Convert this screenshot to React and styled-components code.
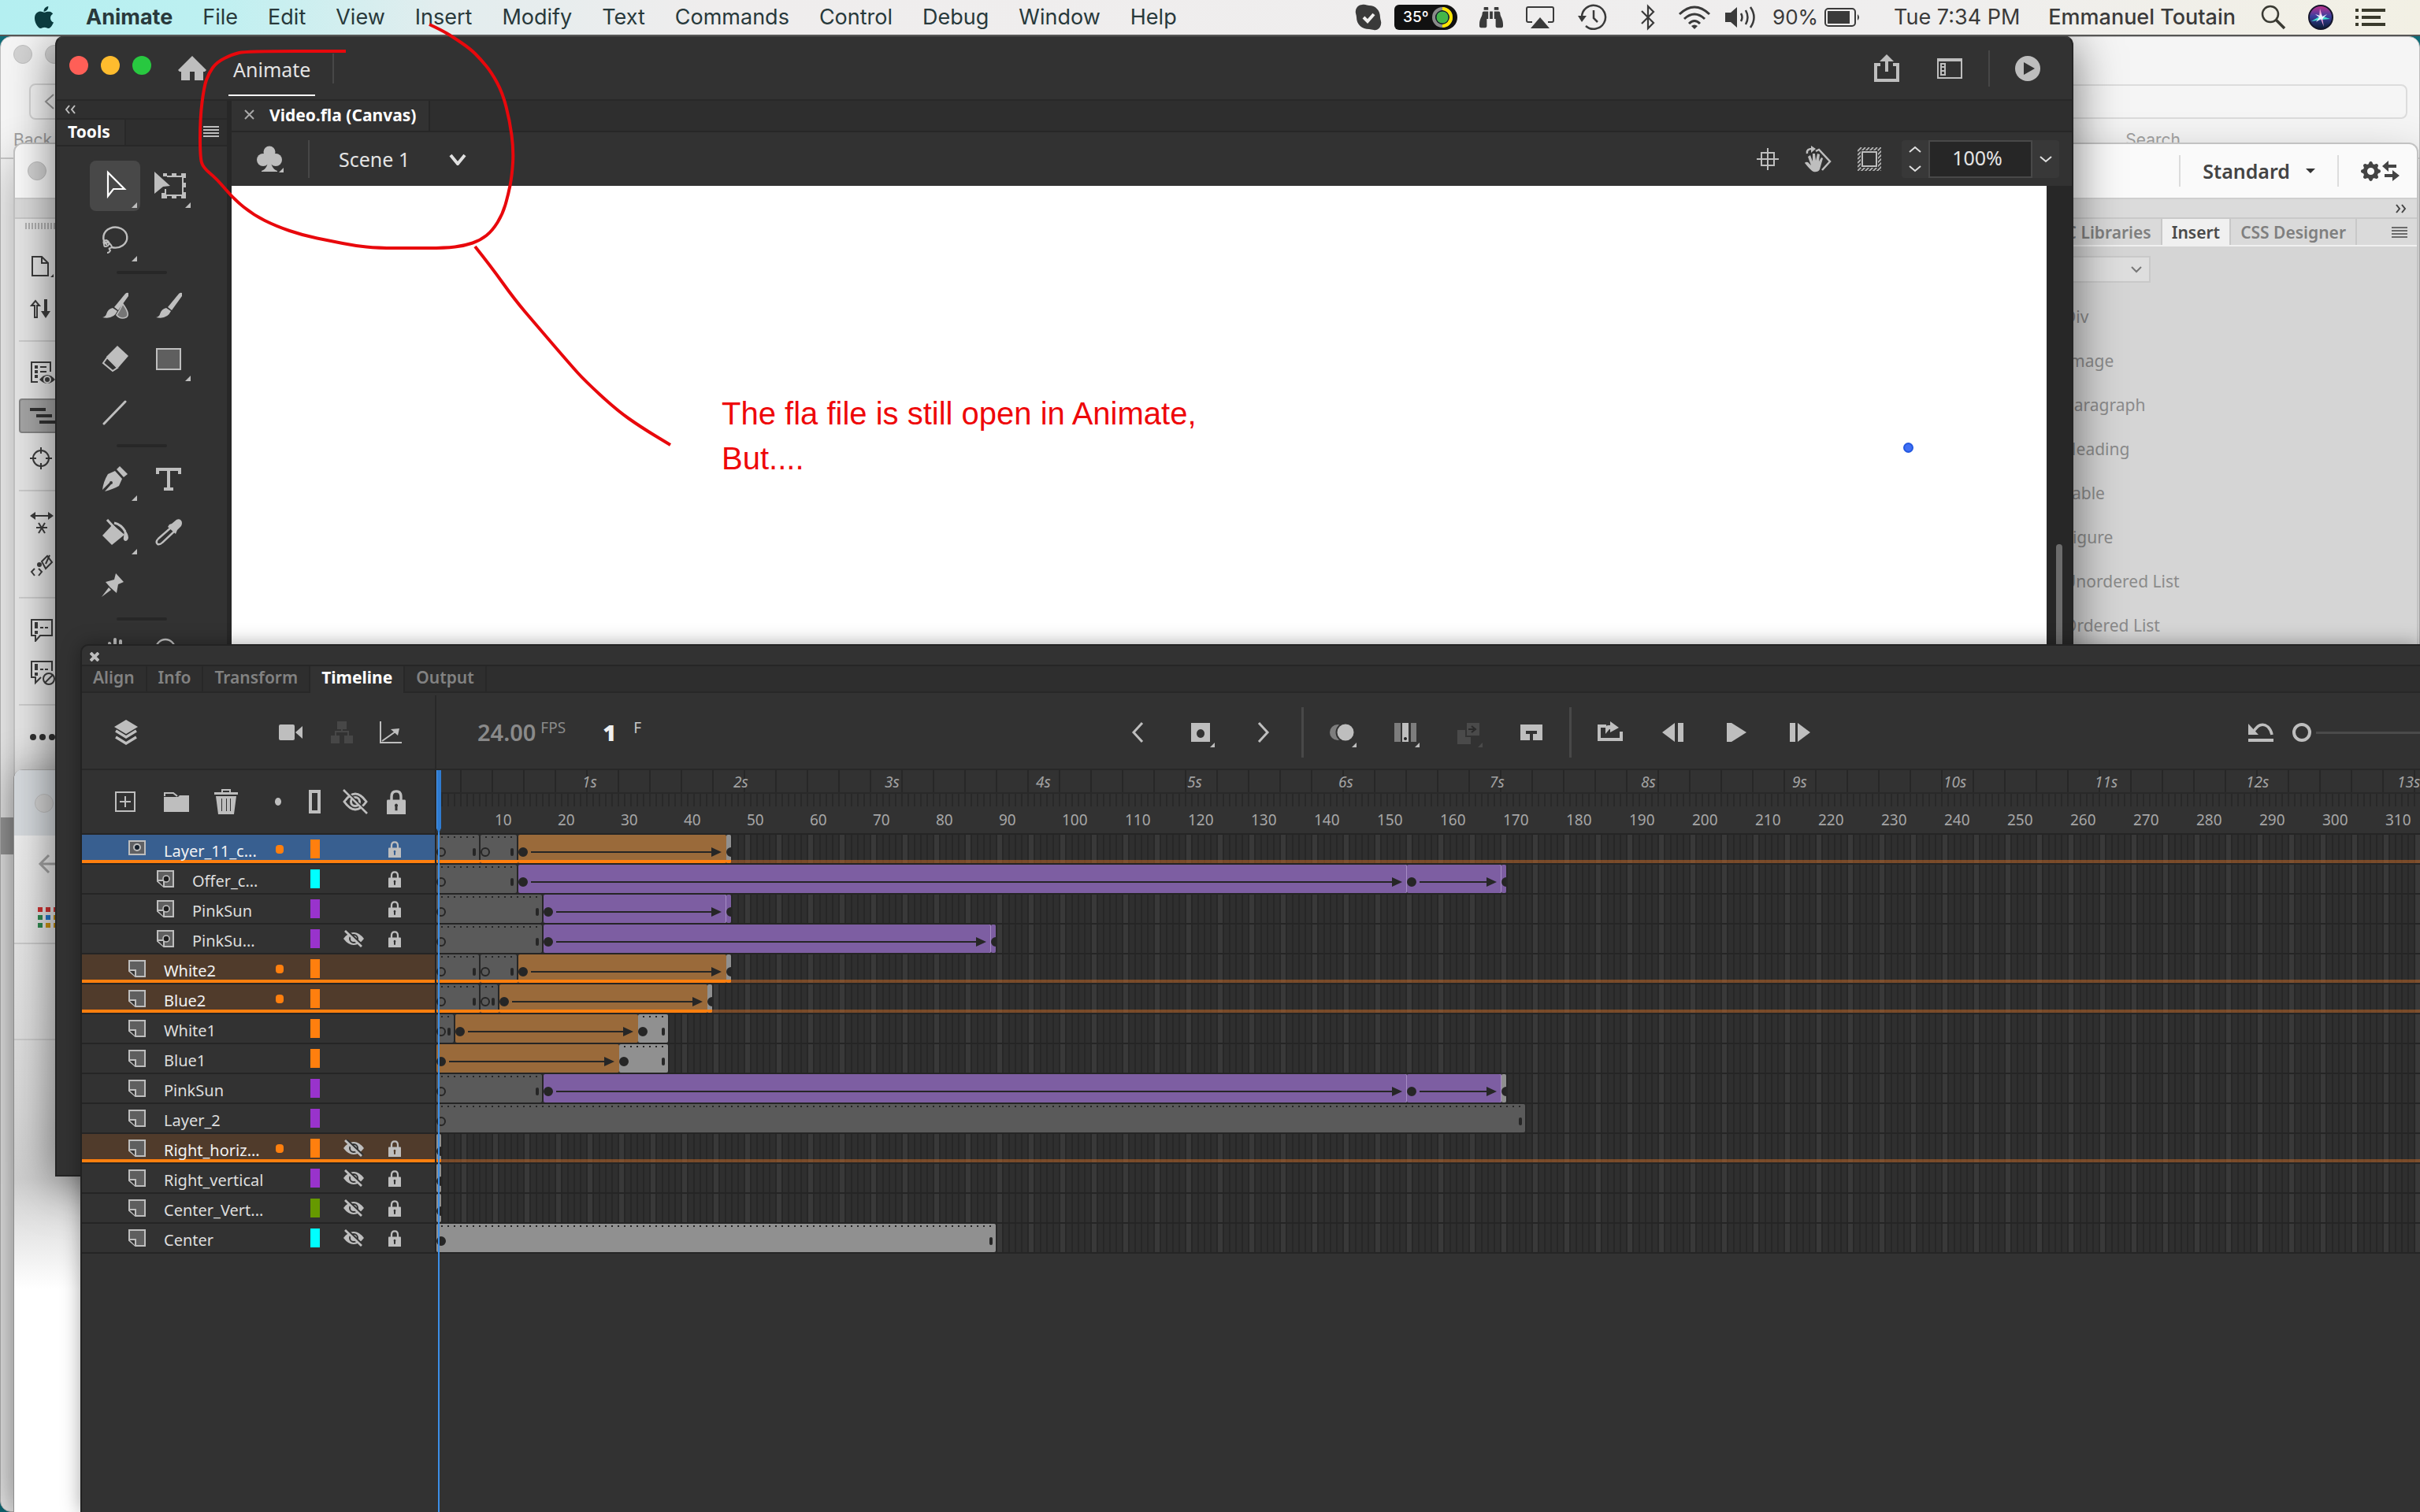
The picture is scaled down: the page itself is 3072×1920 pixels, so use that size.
import React from 'react'
import styled, { createGlobalStyle, css } from 'styled-components'
import { IoLogoApple } from 'react-icons/io5'
import { FaBinoculars } from 'react-icons/fa'
import { BsFillGearFill } from 'react-icons/bs'

const GlobalStyle = createGlobalStyle`
*{
    box-sizing:border-box;
}
html, body, #root{
    margin:0;
    height:100%;
}
body{
    overflow:hidden;
    font-family:"Noto Sans", "Open Sans", sans-serif;
}
button, input, select{
    font:inherit;
    color:inherit;
    background:none;
    border:0;
    margin:0;
    padding:0;
}
ul{
    list-style:none;
    margin:0;
    padding:0;
}
svg{
    display:block;
    flex:none;
}
`

const LIGHT = '#bebebe'

/* ---------- data ---------- */

const menus = ['File', 'Edit', 'View', 'Insert', 'Modify', 'Text', 'Commands', 'Control', 'Debug', 'Window', 'Help']

const insertItems = ['Div', 'Image', 'Paragraph', 'Heading', 'Table', 'Figure', 'Unordered List', 'Ordered List']

const timelineTabs = ['Align', 'Info', 'Transform', 'Timeline', 'Output']

// a span is [kind, frames]
const layers = [
    { name: 'Layer_11_c...', icon: 'mask', color: '#ff7f0e', state: 'selected', lock: true, spans: [['empty', 7], ['empty', 6], ['motion', 33], ['tail', 1]] },
    { name: 'Offer_c...', icon: 'masked', color: '#00ffff', lock: true, spans: [['empty', 13], ['tween', 141], ['tween', 15], ['tweenTail', 1]] },
    { name: 'PinkSun', icon: 'masked', color: '#9933cc', lock: true, spans: [['empty', 17], ['tween', 29], ['tweenTail', 1]] },
    { name: 'PinkSu...', icon: 'masked', color: '#9933cc', hidden: true, lock: true, spans: [['empty', 17], ['tween', 71], ['tweenTail', 1]] },
    { name: 'White2', color: '#ff7f0e', state: 'parented', spans: [['empty', 7], ['empty', 6], ['motion', 33], ['tail', 1]] },
    { name: 'Blue2', color: '#ff7f0e', state: 'parented', spans: [['empty', 7], ['empty', 3], ['motion', 33], ['tail', 1]] },
    { name: 'White1', color: '#ff7f0e', spans: [['empty', 3], ['motion', 29], ['key', 5]] },
    { name: 'Blue1', color: '#ff7f0e', spans: [['motion', 29], ['key', 8]] },
    { name: 'PinkSun', color: '#9933cc', spans: [['empty', 17], ['tween', 137], ['tween', 15], ['tail', 1]] },
    { name: 'Layer_2', color: '#9933cc', spans: [['empty', 173]] },
    { name: 'Right_horiz...', color: '#ff7f0e', state: 'parented', hidden: true, lock: true, spans: [['tail', 1]] },
    { name: 'Right_vertical', color: '#9933cc', hidden: true, lock: true, spans: [['tail', 1]] },
    { name: 'Center_Vert...', color: '#669900', hidden: true, lock: true, spans: [['tail', 1]] },
    { name: 'Center', color: '#00ffff', hidden: true, lock: true, spans: [['key', 89]] },
]

const seconds = Array.from({ length: 13 }, (_, i) => `${i + 1}s`)
const frameNumbers = Array.from({ length: 31 }, (_, i) => (i + 1) * 10)

const loopPoints = [
    [545, 31], [560, 38], [575, 47], [597, 62], [610, 75], [624, 92], [638, 118], [647, 153], [652, 190],
    [650, 223], [645, 248], [638, 272], [625, 293], [610, 305], [590, 312], [565, 315], [522, 315], [480, 315],
    [450, 312], [420, 306], [385, 299], [350, 287], [322, 273], [297, 253], [275, 227], [258, 213], [254, 200],
    [254, 150], [259, 110], [265, 93], [275, 79], [295, 69], [312, 65], [439, 65],
]

const leaderPoints = [
    [603, 313], [623, 338], [653, 380], [681, 413], [724, 463], [742, 483], [782, 520], [813, 542], [851, 565],
]

// runs quadratic curves through the midpoints of a hand drawn line
function smooth(points) {
    const [first, ...rest] = points
    const last = rest[rest.length - 1]
    const curves = rest.slice(0, -1).map(([x, y], i) => {
        const [nx, ny] = rest[i + 1]
        return `Q${x} ${y} ${(x + nx) / 2} ${(y + ny) / 2}`
    })
    return `M${first}${curves.join('')}L${last}`
}

/* ---------- icons ---------- */

function Icon({ w, h, children }) {
    return (
        <svg width={w} height={h} viewBox={`0 0 ${w} ${h}`} fill="none" aria-hidden="true">
            {children}
        </svg>
    )
}

const Chevron = ({ w, h, dir, color = '#e0e0e0', weight = 2 }) => {
    const d = {
        down: `M2 2L${w / 2} ${h - 2}L${w - 2} 2`,
        up: `M2 ${h - 2}L${w / 2} 2L${w - 2} ${h - 2}`,
        left: `M${w - 2} 2L2 ${h / 2}L${w - 2} ${h - 2}`,
        right: `M2 2L${w - 2} ${h / 2}L2 ${h - 2}`,
    }[dir]
    return <Icon w={w} h={h}><path d={d} stroke={color} strokeWidth={weight} /></Icon>
}

const DoubleChevron = ({ flip, color }) => (
    <Icon w={16} h={12}>
        <path d={flip ? 'M2 1L6 6L2 11M9 1L13 6L9 11' : 'M6 1L2 6L6 11M13 1L9 6L13 11'} stroke={color} strokeWidth="2" />
    </Icon>
)

const Lines = ({ color }) => (
    <Icon w={20} h={14}><path d="M0 1H20M0 5H20M0 9H20M0 13H20" stroke={color} strokeWidth="2" /></Icon>
)

const Cross = ({ size, weight, color }) => (
    <Icon w={size} h={size}>
        <path d={`M1 1L${size - 1} ${size - 1}M${size - 1} 1L1 ${size - 1}`} stroke={color} strokeWidth={weight} />
    </Icon>
)

const SkypeIcon = () => (
    <Icon w={34} h={34}>
        <path d="M9 1C13 0 16 2 18 2C26 2 32 8 32 17C32 20 34 23 33 26C32 31 28 34 24 33C22 33 20 32 18 32C9 32 2 26 2 17C2 14 0 11 1 8C2 4 5 1 9 1Z" fill="#3a3a3a" />
        <path d="M11 17L16 22L24 13" stroke="#f0efee" strokeWidth="4" />
    </Icon>
)

const AirplayIcon = () => (
    <Icon w={38} h={30}>
        <path d="M9 21H4Q2 21 2 19V4Q2 2 4 2H34Q36 2 36 4V19Q36 21 34 21H29" stroke="#3a3a3a" strokeWidth="2" />
        <path d="M19 15L31 29H7Z" fill="#3a3a3a" />
    </Icon>
)

const TimeMachineIcon = () => (
    <Icon w={38} h={34}>
        <path d="M6 17A15 15 0 1 1 11 28" stroke="#3a3a3a" strokeWidth="2.5" />
        <path d="M1 15H12L6 23Z" fill="#3a3a3a" />
        <path d="M21 8V18L26 23" stroke="#3a3a3a" strokeWidth="2.5" />
    </Icon>
)

const BluetoothIcon = () => (
    <Icon w={20} h={34}>
        <path d="M2 9L17 24L10 31V3L17 10L2 25" stroke="#3a3a3a" strokeWidth="2.2" />
    </Icon>
)

const WifiIcon = () => (
    <Icon w={42} h={32}>
        <path d="M2 12Q21 -6 40 12M8 18Q21 6 34 18M14 24Q21 17 28 24" stroke="#3a3a3a" strokeWidth="3" />
        <path d="M17 27Q21 24 25 27L21 31Z" fill="#3a3a3a" />
    </Icon>
)

const VolumeIcon = () => (
    <Icon w={42} h={32}>
        <path d="M0 10H7L15 3V29L7 22H0Z" fill="#3a3a3a" />
        <path d="M20 11Q23 16 20 21M26 7Q31 16 26 25M32 3Q41 16 32 29" stroke="#3a3a3a" strokeWidth="2.5" />
    </Icon>
)

const BatteryIcon = () => (
    <Icon w={46} h={24}>
        <rect x="1" y="1" width="38" height="22" rx="4" stroke="#3a3a3a" strokeWidth="2" />
        <rect x="4" y="4" width="28" height="16" fill="#3a3a3a" />
        <path d="M42 8Q46 12 42 16Z" fill="#3a3a3a" />
    </Icon>
)

const SpotlightIcon = () => (
    <Icon w={32} h={32}>
        <circle cx="12" cy="12" r="10" stroke="#3a3a33" strokeWidth="2.5" />
        <path d="M19 19L30 30" stroke="#3a3a33" strokeWidth="3.5" />
    </Icon>
)

const SiriIcon = () => (
    <Icon w={32} h={32}>
        <defs>
            <linearGradient id="siri" x1="0" y1="0" x2="0" y2="1">
                <stop offset="0" stopColor="#c62f8d" />
                <stop offset="0.45" stopColor="#3b3f9e" />
                <stop offset="1" stopColor="#0a1b33" />
            </linearGradient>
        </defs>
        <circle cx="16" cy="16" r="15" fill="url(#siri)" stroke="#15152a" strokeWidth="2" />
        <path d="M4 21L16 14L28 18L17 19Z" fill="#43e0d0" />
        <path d="M15 5L18 15L17 18L14 15ZM18 17L20 28L16 18Z" fill="#f3a5d8" />
        <path d="M16 11L18 15L24 12L19 17L18 19L16 18L10 22L14 16L9 12L15 14Z" fill="#eef8ff" />
    </Icon>
)

const ListIcon = () => (
    <Icon w={38} h={22}>
        <path d="M0 2H4M8 2H38M0 11H4M8 11H32M0 20H4M8 20H38" stroke="#3a3a2c" strokeWidth="4" />
    </Icon>
)

const HomeIcon = () => (
    <Icon w={36} h={32}>
        <path d="M18 0L36 18L34 20H32V31H21V20H15V31H4V20H2L0 18Z" fill={LIGHT} />
    </Icon>
)

const ShareIcon = () => (
    <Icon w={34} h={36}>
        <path d="M9 13H3V33H31V13H25" stroke={LIGHT} strokeWidth="4" />
        <path d="M17 22V6" stroke={LIGHT} strokeWidth="4" />
        <path d="M17 0L26 9H8Z" fill={LIGHT} />
    </Icon>
)

const WorkspaceIcon = () => (
    <Icon w={34} h={28}>
        <rect x="2" y="2" width="30" height="24" stroke={LIGHT} strokeWidth="2" />
        <path d="M1 3H33" stroke={LIGHT} strokeWidth="4" />
        <path d="M6 8H11V22H6ZM6 12H11M6 17H11" stroke={LIGHT} strokeWidth="2" />
    </Icon>
)

const PlayCircle = () => (
    <Icon w={32} h={32}>
        <circle cx="16" cy="16" r="16" fill={LIGHT} />
        <path d="M11 8L25 16L11 24Z" fill="#323232" />
    </Icon>
)

const ClubIcon = () => (
    <Icon w={34} h={34}>
        <circle cx="16" cy="8" r="7.500" fill={LIGHT} />
        <circle cx="8" cy="18" r="8" fill={LIGHT} />
        <circle cx="24" cy="18" r="8" fill={LIGHT} />
        <path d="M15 12H17Q17 29 26 32V33H6V32Q15 29 15 12Z" fill={LIGHT} />
        <path d="M34 28V34H28Z" fill={LIGHT} />
    </Icon>
)

const CenterStage = () => (
    <Icon w={28} h={28}>
        <rect x="6" y="6" width="16" height="16" stroke={LIGHT} strokeWidth="2" />
        <path d="M14 0V11M14 17V28M0 14H11M17 14H28" stroke={LIGHT} strokeWidth="2" />
        <path d="M11 14H17M14 11V17" stroke={LIGHT} strokeWidth="2" />
    </Icon>
)

const RotateHand = () => (
    <Icon w={34} h={34}>
        <path d="M3 10Q2 4 9 4" stroke={LIGHT} strokeWidth="2.5" />
        <path d="M8 0L14 4L8 9Z" fill={LIGHT} />
        <path d="M14 7L18 5L32 20L22 31" stroke={LIGHT} strokeWidth="2.5" />
        <path d="M7 12L10 20L10 10L13 10L14 19L16 10L19 11L18 20L21 15L23 16L19 30Q17 34 11 33Q7 31 0 22Q1 20 4 21L8 25L4 14Z" fill={LIGHT} />
    </Icon>
)

const ClipStage = () => (
    <Icon w={30} h={30}>
        <path d={Array.from({ length: 12 }, (_, i) => `M0 ${i * 5 + 5}L${i * 5 + 5} 0`).join('')} stroke="#b4b4b4" strokeWidth="1.8" />
        <rect x="4" y="4" width="22" height="22" fill="#323232" />
        <rect x="6" y="6" width="18" height="18" stroke={LIGHT} strokeWidth="2" />
    </Icon>
)

const tools = {
    select: <path d="M10 12V42L17 33L31 33Z" transform="translate(13 3)" stroke="#fff" strokeWidth="2.2" />,
    transform: (
        <>
            <path d="M14 14L34 32L25 33L14 42Z" fill={LIGHT} />
            <path d="M30 20H50V44H28V36" stroke={LIGHT} strokeWidth="2" />
            <path d="M25 18H30M36 18H42M48 18H52V22M52 28V34M52 40V46H48M42 46H36M30 46H25V41" stroke={LIGHT} strokeWidth="4" />
        </>
    ),
    lasso: (
        <>
            <path d="M22 39A15 13 0 1 1 28 42" stroke={LIGHT} strokeWidth="2.4" />
            <path d="M18 38Q16 33 21 33Q27 36 23 40Q18 43 18 38Q20 34 25 37Q30 42 26 43Q23 43 26 46Q25 49 22 49" stroke={LIGHT} strokeWidth="2" />
        </>
    ),
    fluid: (
        <>
            <path d="M49 16Q47 15 45 17L31 34L36 38L49 20Z" fill={LIGHT} />
            <path d="M29 35Q23 36 21 43Q20 46 16 47Q30 50 35 39Z" fill={LIGHT} />
            <path d="M42 30Q52 44 46 47Q39 50 34 44Q38 38 42 30Z" fill="#767676" stroke={LIGHT} strokeWidth="1.6" />
        </>
    ),
    brush: (
        <>
            <path d="M49 16Q47 15 45 17L31 34L36 38L49 20Z" fill={LIGHT} />
            <path d="M29 35Q23 36 21 43Q20 46 16 47Q30 50 35 39Z" fill={LIGHT} />
        </>
    ),
    eraser: (
        <>
            <path d="M35 15L49 28L36 43L21 29Z" fill={LIGHT} />
            <path d="M22 30L35 43L29 47L17 37Z" stroke={LIGHT} strokeWidth="2" />
        </>
    ),
    rect: <rect x="17" y="19" width="30" height="26" fill="#5f5f5f" stroke={LIGHT} strokeWidth="2" />,
    line: <path d="M18 46L45 18" stroke={LIGHT} strokeWidth="3" strokeLinecap="round" />,
    pen: (
        <>
            <path d="M38 16L48 26L43 30L34 20Z" fill={LIGHT} />
            <path d="M32 22L41 32L37 41Q30 45 19 48L27 39A2 2 0 1 0 25 37L16 46Q17 36 23 26Z" fill={LIGHT} />
        </>
    ),
    type: <path d="M18 26V20H46V26M32 20V45M26 45H38" stroke={LIGHT} strokeWidth="4" />,
    bucket: (
        <>
            <path d="M29 22L44 35L28 48L16 36Z" fill={LIGHT} />
            <path d="M22 16L33 28M31 20Q40 22 45 31" stroke={LIGHT} strokeWidth="3" />
            <path d="M44 28Q49 34 49 39Q48 43 45 43Q42 42 43 38Z" fill={LIGHT} />
        </>
    ),
    dropper: (
        <>
            <path d="M35 26L19 40Q15 44 18 47Q21 48 24 45L39 31" stroke={LIGHT} strokeWidth="2.4" />
            <path d="M33 22L36 21L42 16Q46 14 48 17Q50 20 48 24L43 29L41 34L31 25Z" fill={LIGHT} />
        </>
    ),
    pin: (
        <>
            <path d="M33 16L43 27L36 30L34 41L26 34L20 27L31 24Z" fill={LIGHT} />
            <path d="M24 34L27 37L15 46Z" fill={LIGHT} />
        </>
    ),
    hand: <path d="M25 21L27 30M32 16V30M39 18V30M45 24L43 32" stroke={LIGHT} strokeWidth="4" strokeLinecap="round" />,
    zoom: <circle cx="28" cy="28" r="12" stroke={LIGHT} strokeWidth="2.4" />,
}

const toolRows = [
    [['select', 'Selection', true], ['transform', 'Free Transform', true]],
    [['lasso', 'Lasso', true]],
    null,
    [['fluid', 'Fluid Brush'], ['brush', 'Classic Brush']],
    [['eraser', 'Eraser'], ['rect', 'Rectangle', true]],
    [['line', 'Line']],
    null,
    [['pen', 'Pen', true], ['type', 'Type']],
    [['bucket', 'Paint Bucket', true], ['dropper', 'Eyedropper']],
    [['pin', 'Asset Warp']],
    null,
    [['hand', 'Hand'], ['zoom', 'Zoom']],
]

const LayersIcon = () => (
    <Icon w={30} h={32}>
        <path d="M15 0L30 9L15 18L0 9Z" fill={LIGHT} />
        <path d="M2 14L15 22L28 14M2 22L15 30L28 22" stroke={LIGHT} strokeWidth="3.4" />
    </Icon>
)

const CameraIcon = () => (
    <Icon w={32} h={20}>
        <path d="M2 0H18Q20 0 20 2V18Q20 20 18 20H2Q0 20 0 18V2Q0 0 2 0ZM21 10L30 2V18Z" fill={LIGHT} />
    </Icon>
)

const TreeIcon = () => (
    <Icon w={28} h={28}>
        <path d="M8 0H20V10H8ZM0 18H11V28H0ZM17 18H28V28H17Z" fill="#474747" />
        <path d="M14 8V13M6 18V13H22V18" stroke="#474747" strokeWidth="2" />
    </Icon>
)

const GraphIcon = () => (
    <Icon w={28} h={28}>
        <path d="M1 0V27H28M3 25L20 13" stroke={LIGHT} strokeWidth="2" />
        <path d="M25 9L23 18L14 10Z" fill={LIGHT} />
    </Icon>
)

const AddIcon = () => (
    <Icon w={26} h={26}>
        <rect x="1" y="1" width="24" height="24" stroke={LIGHT} strokeWidth="2" />
        <path d="M13 6V20M6 13H20" stroke={LIGHT} strokeWidth="2" />
    </Icon>
)

const FolderIcon = () => (
    <Icon w={32} h={25}>
        <path d="M1 5V1H12L17 5" stroke={LIGHT} strokeWidth="2" />
        <path d="M0 6L18 6L20 4H32V25H0Z" fill={LIGHT} />
    </Icon>
)

const TrashIcon = () => (
    <Icon w={30} h={32}>
        <path d="M10 4V1H20V4" stroke={LIGHT} strokeWidth="2" />
        <path d="M0 4H30V7H0Z" fill={LIGHT} />
        <path fillRule="evenodd" d="M2 9H28L25 32H5ZM9 12V28H10V12ZM15 12V28H16V12ZM20 12V28H21V12Z" fill={LIGHT} />
    </Icon>
)

const EyeOff = () => (
    <Icon w={32} h={32}>
        <path d="M2 16Q9 6 16 6Q23 6 30 16Q23 26 16 26Q9 26 2 16Z" stroke={LIGHT} strokeWidth="3" />
        <circle cx="16" cy="16" r="5.500" stroke={LIGHT} strokeWidth="3" />
        <path d="M3 1L32 30" stroke="#323232" strokeWidth="2.500" />
        <path d="M1 1L31 31" stroke={LIGHT} strokeWidth="2.6" />
    </Icon>
)

const SmallEyeOff = () => (
    <Icon w={26} h={22}>
        <path d="M0 11Q6 3 13 3Q20 3 26 11Q20 19 13 19Q6 19 0 11Z" fill={LIGHT} />
        <circle cx="13" cy="11" r="5" stroke="#323232" strokeWidth="2" />
        <path d="M4 0L25 20" stroke="#323232" strokeWidth="2.500" />
        <path d="M2 1L23 21" stroke={LIGHT} strokeWidth="2.800" />
    </Icon>
)

const LockIcon = ({ w, h }) => (
    <svg width={w} height={h} viewBox="0 0 24 32" preserveAspectRatio="none" fill="none" aria-hidden="true">
        <path d="M6 14V9Q6 2 12 2Q18 2 18 9V14" stroke={LIGHT} strokeWidth="3.4" />
        <path fillRule="evenodd" d="M1 13H23Q24 13 24 15V32H0V15Q0 13 1 13ZM12 18A2.5 2.5 0 0 0 10.500 22V27H13.500V22A2.500 2.500 0 0 0 12 18Z" fill={LIGHT} />
    </svg>
)

const LayerIcon = ({ kind }) => (
    <Icon w={22} h={22}>
        {kind === 'mask' ? (
            <>
                <rect x="1" y="1" width="20" height="17" fill="#5f6063" stroke={LIGHT} strokeWidth="2" />
                <circle cx="11" cy="9" r="4" fill="#16202c" stroke={LIGHT} strokeWidth="2" />
            </>
        ) : (
            <>
                <path d="M1 1H21V21H9L1 14Z" fill="#5f5f5f" stroke={LIGHT} strokeWidth="2" />
                <path d="M1 13H9V21" fill="#323232" stroke={LIGHT} strokeWidth="2" />
                {kind === 'masked' && <circle cx="12" cy="11" r="4" fill="#1c1c1c" stroke={LIGHT} strokeWidth="1.6" />}
            </>
        )}
    </Icon>
)

const dim = '#4a4a4a'
const Corner = ({ x, y, c = LIGHT }) => <path d={`M${x + 6} ${y}V${y + 6}H${x}Z`} fill={c} />

const frameControls = [
    ['Previous keyframe', <path d="M30 12L19 24L30 36" stroke={LIGHT} strokeWidth="3" />],
    ['Insert keyframe', <><path fillRule="evenodd" d="M12 12H36V36H12ZM24 20A5 5.500 0 1 0 24.100 20Z" fill={LIGHT} /><Corner x={36} y={37} /></>],
    ['Next keyframe', <path d="M18 12L29 24L18 36" stroke={LIGHT} strokeWidth="3" />],
    null,
    ['Onion skin', <><circle cx="18" cy="24" r="10" fill="#7d7d7d" /><circle cx="28" cy="24" r="11.500" fill={LIGHT} stroke="#323232" strokeWidth="2" /><Corner x={36} y={37} /></>],
    ['Edit multiple frames', <><path d="M10 12H18V36H10ZM31 12H38V36H31Z" fill="#7d7d7d" /><path d="M20 12H28V36H20Z" fill={LIGHT} /><circle cx="24" cy="32" r="2" fill="#222" /><Corner x={36} y={37} /></>],
    ['Create tween', <><path d="M22 12H38V28H22ZM10 21H20V30H27V39H10Z" fill={dim} /><path d="M24 20H31M28 16L33 20L28 24" stroke="#2a2a2a" strokeWidth="2" /><Corner x={36} y={37} c={dim} /></>],
    ['Frame view', <><path d="M10 14H38V34H26V26H31V22H17V26H22V34H10Z" fill={LIGHT} /></>],
    null,
    ['Loop', <><path d="M19 16H10V33H38V23" stroke={LIGHT} strokeWidth="4" /><path d="M18 26V18Q18 15 22 15H24V10L35 18L24 24V20H23Z" fill={LIGHT} /></>],
    ['Step back', <path d="M26 12V36L10 24ZM30 12H37V36H30Z" fill={LIGHT} />],
    ['Play', <path d="M12 12H18L37 24L18 36H12Z" fill={LIGHT} />],
    ['Step forward', <path d="M22 12V36L38 24ZM12 12H19V36H12Z" fill={LIGHT} />],
]

/* ---------- desktop and menu bar ---------- */

const Desktop = styled.main`
position:relative;
width:100%;
height:100%;
overflow:hidden;
background:#0f6c77;
`

const MenuBar = styled.header`
position:relative;
z-index:1;
display:flex;
align-items:center;
height:46px;
padding:0 44px 0 40px;
background:linear-gradient(90deg, #b4eff1 0, #bdf0f1 260px, #e2edee 560px, #efeded 900px, #efeeee 80%, #f2f0e4 100%);
border-bottom:2px solid #565655;
color:#28393b;
font-family:Inter, Roboto, sans-serif;
font-size:27px;
line-height:36px;
a{
    color:inherit;
    text-decoration:none;
}
`

const MenuLink = styled.a`
margin-right:38px;
font-weight:${p => p.$strong ? 700 : 400};
`

const AppleMark = styled.span`
margin-right:37px;
color:#0b3b3f;
font-size:32px;
`

const StatusArea = styled.div`
display:flex;
align-items:center;
gap:28px;
margin-left:auto;
color:#3a3a3a;
`

const StatusGroup = styled.div`
display:flex;
align-items:center;
gap:${p => p.$gap}px;
padding-left:${p => p.$apart ? 14 : 0}px;
`

const Percent = styled.span`
font-size:26px;
`

const UserName = styled.span`
margin-right:4px;
font-weight:500;
`

const TempBadge = styled.span`
display:flex;
align-items:center;
justify-content:space-between;
width:80px;
height:32px;
padding:0 6px 0 11px;
border-radius:6px 16px 16px 6px;
background:#111;
color:#fff;
font-size:19px;
font-weight:500;
`

/* ---------- background windows ---------- */

const Window = styled.section`
position:absolute;
left:${p => p.$left}px;
right:${p => p.$right}px;
top:${p => p.$top}px;
bottom:${p => p.$bottom}px;
overflow:hidden;
`

const BrowserBack = styled(Window)`
border-radius:14px;
background:#f5f5f5;
border:1px solid #bdbdbd;
`

const BrowserToolbar = styled.div`
display:flex;
justify-content:space-between;
height:155px;
border-bottom:2px solid #c9c9c9;
color:#a2a2a2;
font-family:Inter, sans-serif;
font-size:21px;
line-height:28px;
`

const BrowserCell = styled.div`
display:flex;
flex-direction:column;
align-items:${p => p.$end ? 'flex-end' : 'flex-start'};
padding:${p => p.$end ? '60px 15px 0 0' : '10px 0 0 16px'};
`

const GreyLight = styled.span`
width:24px;
height:24px;
border-radius:50%;
background:#d3d3d3;
border:1px solid #bfbfbf;
`

const LightRow = styled.div`
display:flex;
gap:16px;
`

const BackButton = styled.button`
display:flex;
align-items:center;
width:60px;
height:46px;
margin:25px 0 12px 20px;
padding-left:17px;
border:2px solid #d5d5d5;
border-radius:8px;
`

const SearchField = styled.input`
width:700px;
height:44px;
border:2px solid #dcdcdc;
border-radius:8px;
`

const SearchLabel = styled.label`
margin:13px 288px 0 0;
`

const ScrollBlock = styled.div`
width:18px;
height:47px;
margin-top:836px;
background:#a3a3a3;
`

const Dreamweaver = styled(Window)`
display:flex;
flex-direction:column;
border-radius:12px 12px 0 0;
border:2px solid #c2c2c2;
background:#d5d5d5;
box-shadow:0 24px 60px rgba(0,0,0,.3);
`

const DwBar = styled.div`
display:flex;
align-items:center;
justify-content:space-between;
height:70px;
padding:0 22px 0 16px;
background:#fafafa;
border-bottom:2px solid #cfcfcf;
color:#444;
font-size:25px;
font-weight:600;
`

const DwSeparator = styled.span`
width:2px;
height:40px;
margin:0 28px;
background:#dcdcdc;
`

const DwStandard = styled.button`
display:flex;
align-items:center;
gap:20px;
`

const GearSwap = styled.button`
display:flex;
align-items:center;
gap:2px;
`

const DwStrip = styled.div`
display:flex;
align-items:center;
justify-content:flex-end;
height:25px;
padding-right:12px;
background:#dbdbdb;
border-bottom:2px solid #c9c9c9;
`

const DwBody = styled.div`
flex:1;
display:flex;
justify-content:space-between;
`

const DwTools = styled.div`
display:flex;
flex-direction:column;
align-items:flex-start;
width:60px;
padding:5px 0 0 5px;
background:#e6e6e6;
`

const Grip = styled.span`
width:40px;
height:8px;
margin:0 0 20px 8px;
background:repeating-linear-gradient(90deg, #b0b0b0 0 2px, transparent 2px 4px);
`

const DwTool = styled.button`
display:flex;
align-items:center;
width:60px;
height:54px;
padding-left:14px;
${p => p.$active && css`
    height:44px;
    margin:5px 0;
    border:2px solid #858585;
    border-radius:4px;
    background:#a6a6a6;
    padding-left:10px;
`}
`

const DwRule = styled.span`
width:56px;
height:2px;
margin:13px 0;
background:#cdcdcd;
`

const InsertPanel = styled.aside`
width:540px;
color:#8b8b8b;
font-size:21px;
`

const DwTabs = styled.div`
display:flex;
justify-content:flex-end;
height:35px;
border-bottom:2px solid #f0f0f0;
`

const DwTab = styled.button`
padding:0 12px;
border-right:2px solid #c8c8c8;
background:${p => p.$on ? '#f0f0f0' : '#dadada'};
color:${p => p.$on ? '#4a4a4a' : '#7f7f7f'};
font-size:21px;
font-weight:600;
line-height:30px;
`

const DwTabEnd = styled.span`
display:flex;
align-items:center;
justify-content:flex-end;
width:76px;
padding-right:12px;
background:#dadada;
`

const DwSelect = styled.button`
display:flex;
align-items:center;
justify-content:flex-end;
width:142px;
height:34px;
margin:12px 0 15px 60px;
padding-right:8px;
border:2px solid #c9c9c9;
background:#dedede;
`

const InsertItem = styled.li`
padding-left:92px;
line-height:56px;
`

const Chrome = styled(Window)`
border-radius:12px 0 0 0;
border-left:1px solid #8d8d8d;
background:linear-gradient(180deg, #f2f2f2 0, #d8d8d8 430px, #cfcfcf 520px, #fff 660px);
box-shadow:0 0 50px rgba(0,0,0,.35);
`

const ChromeTabs = styled.div`
display:flex;
align-items:center;
height:84px;
padding:0 0 0 26px;
border-top:1px solid #aaa;
background:#d6dade;
`

const ChromeRow = styled.div`
display:flex;
align-items:center;
height:${p => p.$h}px;
padding-left:30px;
border-bottom:${p => p.$line ? '2px solid #cacaca' : '0'};
`

/* ---------- animate window ---------- */

const AnimateWindow = styled(Window)`
display:flex;
flex-direction:column;
border-radius:12px 12px 0 0;
border:2px solid #242424;
border-top-color:#3a3a3a;
background:#323232;
color:#e4e4e4;
box-shadow:0 10px 60px rgba(0,0,0,.55);
`

const TitleBar = styled.div`
display:flex;
align-items:center;
height:81px;
padding:0 40px 0 16px;
border-bottom:2px solid #282828;
`

const TrafficLight = styled.button`
width:24px;
height:24px;
margin:0 16px 8px 0;
border-radius:50%;
background:${p => p.$color};
`

const HomeButton = styled.button`
margin:0 28px 0 18px;
`

const WorkspaceTab = styled.button`
align-self:stretch;
margin-bottom:4px;
padding:8px 6px 0;
border-bottom:2px solid #fff;
font-size:25px;
line-height:34px;
`

const Divider = styled.span`
flex:none;
width:2px;
height:${p => p.$h}px;
margin:0 ${p => p.$gap || 0}px;
background:#474747;
`

const TitleActions = styled.div`
display:flex;
align-items:center;
gap:32px;
margin-left:auto;
button:first-child{
    margin-right:14px;
}
`

const AnimateBody = styled.div`
flex:1;
display:flex;
`

const ToolPanel = styled.aside`
display:flex;
flex-direction:column;
width:222px;
border-right:6px solid #272727;
`

const Collapse = styled.div`
display:flex;
align-items:center;
height:24px;
padding-left:10px;
border-bottom:2px solid #282828;
background:#2f2f2f;
`

const PanelHeading = styled.div`
display:flex;
justify-content:space-between;
align-items:center;
height:34px;
padding:0 10px 2px 0;
border-bottom:2px solid #282828;
background:linear-gradient(90deg, #323232 86px, #282828 86px 88px, #2e2e2e 88px);
h2{
    margin:0 0 0 14px;
    font-size:21px;
    line-height:28px;
    color:#fff;
}
`

const ToolGrid = styled.div`
display:flex;
flex-direction:column;
gap:4px;
padding:18px 0 0 42px;
`

const ToolRow = styled.div`
display:flex;
gap:4px;
`

const ToolButton = styled.button`
width:64px;
height:64px;
border-radius:8px;
background:${p => p.$active ? '#484848' : 'none'};
`

const ToolDivider = styled.span`
width:64px;
height:4px;
margin:4px 0 4px 34px;
border-radius:2px;
background:#272727;
`

const DocArea = styled.div`
flex:1;
display:flex;
flex-direction:column;
min-width:0;
`

const DocTabs = styled.div`
display:flex;
height:40px;
border-bottom:2px solid #272727;
background:#2e2e2e;
`

const DocTab = styled.button`
display:flex;
align-items:center;
gap:19px;
padding:0 16px 3px 16px;
border-right:2px solid #272727;
background:#323232;
color:#fff;
font-size:21px;
font-weight:700;
`

const SceneBar = styled.div`
display:flex;
align-items:center;
height:68px;
padding:0 16px 0 32px;
`

const SceneButton = styled.button`
display:flex;
align-items:center;
gap:50px;
padding-left:6px;
font-size:25px;
`

const StageTools = styled.div`
display:flex;
align-items:center;
gap:33px;
margin-left:auto;
`

const ZoomBox = styled.div`
display:flex;
height:48px;
margin-left:-7px;
border-radius:4px;
background:#383838;
`

const Stepper = styled.div`
display:flex;
flex-direction:column;
justify-content:space-between;
align-items:center;
width:34px;
padding:7px 0;
`

const ZoomInput = styled.input`
width:132px;
padding:0 8px 4px 0;
border:2px solid #484848;
background:#262626;
font-size:25px;
text-align:center;
`

const ZoomMenu = styled.button`
display:flex;
align-items:center;
justify-content:center;
width:34px;
`

const StageRow = styled.div`
flex:1;
display:flex;
`

const Stage = styled.div`
position:relative;
flex:1;
background:#fff;
`

const Note = styled.p`
position:absolute;
left:622px;
top:261px;
margin:0;
color:#ee0709;
font:40px/57px "Liberation Sans", Arial, sans-serif;
white-space:pre-line;
`

const BlueDot = styled.span`
position:absolute;
right:169px;
top:326px;
width:13px;
height:13px;
border-radius:50%;
background:#3f6ff5;
border:2px solid #2358e0;
`

const StageGutter = styled.div`
width:32px;
padding:455px 0 0 12px;
background:#272727;
`

const ScrollThumb = styled.span`
display:block;
width:8px;
height:300px;
border-radius:4px;
background:#6c6c6c;
`

/* ---------- timeline ---------- */

const TimelineWindow = styled(Window)`
display:flex;
flex-direction:column;
border-radius:10px 0 0 0;
border-left:2px solid #222;
border-top:2px solid #222;
background:#323232;
color:#c8c8c8;
box-shadow:0 0 24px rgba(0,0,0,.35);
`

const TimelineTop = styled.div`
height:26px;
padding:8px 0 0 10px;
border-bottom:2px solid #262626;
`

const TabStrip = styled.div`
display:flex;
height:34px;
border-bottom:2px solid #282828;
background:#2e2e2e;
`

const TimelineTab = styled.button`
height:${p => p.$on ? 34 : 32}px;
padding:0 14px ${p => p.$on ? 6 : 4}px;
border-right:2px solid #282828;
background:${p => p.$on ? '#323232' : 'none'};
color:${p => p.$on ? '#fff' : '#828282'};
font-size:21px;
font-weight:${p => p.$on ? 700 : 600};
line-height:28px;
`

const TimelineTools = styled.div`
display:flex;
height:98px;
padding-top:3px;
border-bottom:2px solid #282828;
`

const LayerTools = styled.div`
display:flex;
align-items:center;
width:450px;
padding:0 42px 0 41px;
border-right:2px solid #282828;
button + button{
    margin-left:34px;
}
button:nth-child(2){
    margin-left:auto;
}
`

const Readouts = styled.div`
flex:796 1 0;
display:flex;
align-items:center;
padding-left:52px;
font-size:29px;
font-weight:600;
color:#8a8a8a;
sup{
    align-self:flex-start;
    margin:25px 0 0 6px;
    font-size:19px;
    font-weight:400;
    line-height:32px;
}
b{
    margin-left:47px;
    color:#f0f0f0;
}
b + sup{
    margin-left:22px;
    color:#c8c8c8;
}
`

const Controls = styled.div`
display:flex;
align-items:center;
`

const ControlButton = styled.button`
width:80px;
padding:0 16px;
`

const ControlDivider = styled.span`
width:20px;
height:64px;
background:linear-gradient(90deg, transparent 8px, #484848 8px 11px, transparent 11px);
`

const ZoomGroup = styled.div`
flex:746 1 0;
display:flex;
align-items:center;
justify-content:flex-end;
gap:24px;
`

const ZoomSlider = styled.input`
appearance:none;
width:162px;
height:24px;
background:linear-gradient(#4a4a4a, #4a4a4a) 30px 11px / 140px 3px no-repeat;
&::-webkit-slider-thumb{
    appearance:none;
    width:24px;
    height:24px;
    border:4px solid ${LIGHT};
    border-radius:50%;
    background:#323232;
}
`

const Grid = styled.div`
position:relative;
flex:1;
`

const GridRow = styled.div`
display:flex;
height:${p => p.$head ? 82 : 38}px;
border-bottom:2px solid #252525;
`

const LayerHead = styled.div`
display:flex;
align-items:center;
flex:none;
width:450px;
padding:0 37px 0 42px;
border-right:2px solid #252525;
`

const HeadDot = styled.span`
width:10px;
height:10px;
margin:0 35px 0 47px;
border-radius:50%;
background:${LIGHT};
`

const OutlineBox = styled.span`
width:16px;
height:30px;
margin-right:28px;
border:4px solid ${LIGHT};
`

const HeadButton = styled.button`
margin-right:${p => p.$gap}px;
`

const LayerCell = styled.div`
display:flex;
align-items:center;
flex:none;
width:450px;
padding:0 43px 0 ${p => p.$indent ? 95 : 59}px;
border-right:2px solid #252525;
color:#dedede;
background:#323232;
${p => p.$state && css`
    color:#f2f2f2;
    background:${p.$state === 'selected' ? '#385f90' : '#503b2b'};
    box-shadow:inset 0 -4px #ff7f0e;
`}
`

const LayerName = styled.button`
flex:1;
padding-top:5px;
margin-left:23px;
text-align:left;
white-space:nowrap;
font-size:20px;
line-height:31px;
`

const ParentDot = styled.span`
width:10px;
height:11px;
margin-right:34px;
border-radius:4px;
background:#ff7f0e;
`

const Swatch = styled.button`
width:12px;
height:24px;
background:${p => p.$color};
`

const CellSlot = styled.span`
display:flex;
justify-content:center;
width:${p => p.$w}px;
margin-left:${p => p.$gap}px;
`

const FrameStrip = styled.div`
flex:1;
display:flex;
min-width:0;
overflow:hidden;
background:
    ${p => p.$state && css`linear-gradient(rgba(196,104,38,.5), rgba(196,104,38,.5)) 0 100% / 100% 4px no-repeat,`}
    repeating-linear-gradient(90deg, transparent 0 32px, #393939 32px 38px, transparent 38px 40px),
    repeating-linear-gradient(90deg, #2f2f2f 0 6px, #272727 6px 8px);
`

const spanFill = {
    empty: '#5a5a5a',
    key: '#909090',
    tail: '#909090',
    motion: '#9a6a3a',
    tween: '#7d5ea2',
    tweenTail: '#7d5ea2',
}

const Span = styled.div`
position:relative;
display:flex;
align-items:center;
flex:none;
width:${p => p.$frames * 8 - (p.$last ? 2 : 0)}px;
margin-right:${p => p.$last ? 2 : 0}px;
padding-top:8px;
overflow:hidden;
border-radius:2px;
background-color:${p => spanFill[p.$kind]};
${p => (p.$kind === 'empty' || p.$kind === 'key') && css`
    background-image:repeating-linear-gradient(90deg, transparent 0 6px, #262626 6px 8px);
    background-size:calc(100% - 4px) 2px;
    background-position:0 2px;
    background-repeat:no-repeat;
`}
${p => p.$kind === 'empty' && !p.$last && css`box-shadow:inset -2px 0 #262626;`}
${p => p.$kind === 'tween' && css`box-shadow:inset -1px 0 #a58cc4;`}
${p => p.$state && css`
    &::after{
        content:"";
        position:absolute;
        left:0;
        right:0;
        bottom:0;
        height:4px;
        background:#ff7f0e;
    }
`}
`

const Keyframe = styled.span`
flex:none;
width:12px;
height:12px;
border-radius:50%;
border:2px solid #262626;
background:${p => p.$hollow ? 'none' : '#262626'};
`

const EndMark = styled.span`
width:4px;
height:10px;
margin-left:auto;
margin-right:${p => p.$last ? 4 : 6}px;
border-radius:2px;
background:#262626;
`

const Arrow = styled.span`
flex:1;
height:2px;
margin:0 18px 0 4px;
background:#262626;
position:relative;
&::after{
    content:"";
    position:absolute;
    right:-12px;
    top:-5px;
    border:6px solid transparent;
    border-left:13px solid #262626;
    border-right:0;
}
`

const Ruler = styled.div`
flex:1;
min-width:0;
overflow:hidden;
`

const SecondsRow = styled.div`
display:flex;
height:30px;
padding-left:185px;
border-bottom:2px solid #292929;
background:repeating-linear-gradient(90deg, transparent 0 30px, #272727 30px 32px, transparent 32px 40px);
color:#a2a2a2;
font-size:19px;
font-style:italic;
line-height:30px;
span{
    flex:none;
    width:192px;
}
`

const TickRow = styled.div`
height:16px;
background:repeating-linear-gradient(90deg, transparent 0 6px, #292929 6px 8px);
`

const NumbersRow = styled.div`
display:flex;
padding-left:74px;
color:#a6a6a6;
font-size:19px;
line-height:34px;
span{
    flex:none;
    width:80px;
}
`

const Playhead = styled.div`
position:absolute;
left:450px;
top:0;
bottom:0;
width:6px;
background:
    linear-gradient(#3c8fe8, #3c8fe8) 2px 0 / 2px 100% no-repeat;
&::before{
    content:"";
    display:block;
    width:6px;
    height:80px;
    background:#2f7bd0;
    box-shadow:inset 1px 0 #4a9af0;
    clip-path:polygon(0 0, 100% 0, 100% 92%, 50% 100%, 0 92%);
}
`

const Scribble = styled.svg`
position:absolute;
z-index:2;
left:0;
top:0;
pointer-events:none;
`

/* ---------- parts ---------- */

function TopMenu() {
    return (
        <MenuBar>
            <AppleMark><IoLogoApple /></AppleMark>
            <MenuLink href="#animate" $strong>Animate</MenuLink>
            {menus.map(m => <MenuLink key={m} href={`#${m.toLowerCase()}`}>{m}</MenuLink>)}
            <StatusArea>
                <StatusGroup $gap={16}>
                    <SkypeIcon />
                    <TempBadge>
                        35º
                        <Icon w={26} h={26}>
                            <circle cx="13" cy="13" r="11" stroke="#8a8a8a" strokeWidth="4" />
                            <path d="M13 2A11 11 0 0 1 13 24" stroke="#ffe500" strokeWidth="4" />
                            <circle cx="13" cy="13" r="8" fill="#45b649" stroke="#123" strokeWidth="1" />
                        </Icon>
                    </TempBadge>
                </StatusGroup>
                <FaBinoculars size={30} />
                <AirplayIcon />
                <TimeMachineIcon />
                <StatusGroup $gap={0} $apart><BluetoothIcon /></StatusGroup>
                <StatusGroup $gap={18}>
                    <WifiIcon />
                    <VolumeIcon />
                    <StatusGroup $gap={8}>
                        <Percent>90%</Percent>
                        <BatteryIcon />
                    </StatusGroup>
                </StatusGroup>
                <StatusGroup $gap={36} $apart>
                    <span>Tue 7:34 PM</span>
                    <UserName>Emmanuel Toutain</UserName>
                </StatusGroup>
                <SpotlightIcon />
                <SiriIcon />
                <ListIcon />
            </StatusArea>
        </MenuBar>
    )
}

function BrowserWindow() {
    return (
        <BrowserBack $left={0} $right={0} $top={46} $bottom={0}>
            <BrowserToolbar>
                <BrowserCell>
                    <LightRow><GreyLight /><GreyLight /></LightRow>
                    <BackButton aria-label="Back"><Chevron w={14} h={22} dir="left" color="#9c9c9c" /></BackButton>
                    <span>Back</span>
                </BrowserCell>
                <BrowserCell $end>
                    <SearchField id="page-search" />
                    <SearchLabel htmlFor="page-search">Search</SearchLabel>
                </BrowserCell>
            </BrowserToolbar>
            <ScrollBlock />
        </BrowserBack>
    )
}

const ink = { stroke: '#3d3d3d', strokeWidth: 2 }

function DreamweaverWindow() {
    return (
        <Dreamweaver $left={17} $right={2} $top={181} $bottom={0}>
            <DwBar>
                <GreyLight />
                <StatusGroup $gap={0}>
                    <DwSeparator />
                    <DwStandard>
                        Standard
                        <Icon w={12} h={6}><path d="M0 0H12L6 6Z" fill="#333" /></Icon>
                    </DwStandard>
                    <DwSeparator />
                    <GearSwap aria-label="Workspace settings">
                        <BsFillGearFill size={25} />
                        <Icon w={22} h={26}>
                            <path d="M18 7H6M3 19H15" stroke="#444" strokeWidth="4" />
                            <path d="M8 0V14L0 7ZM13 12V26L22 19Z" fill="#444" />
                        </Icon>
                    </GearSwap>
                </StatusGroup>
            </DwBar>
            <DwStrip><DoubleChevron flip color="#444" /></DwStrip>
            <DwBody>
                <DwTools>
                    <Grip />
                    <DwTool aria-label="Open documents">
                        <Icon w={30} h={28}><path d="M3 2H15L23 10V26H3ZM15 2V10H23" {...ink} /><path d="M30 24V28H26Z" fill="#3d3d3d" /></Icon>
                    </DwTool>
                    <DwTool aria-label="File management">
                        <Icon w={30} h={24}><path d="M6 23V8H2L7 2L12 8H9V23Z" {...ink} /><path d="M18 0H22V15H26L20 24L14 15H18Z" fill="#3d3d3d" /></Icon>
                    </DwTool>
                    <DwRule />
                    <DwTool aria-label="Live view options">
                        <Icon w={34} h={32}>
                            <path d="M10 27H2V2H26V14" {...ink} />
                            <path d="M6 8H10M6 14H10M6 20H10" stroke="#3d3d3d" strokeWidth="4" />
                            <path d="M13 8H21M13 14H21" {...ink} />
                            <path d="M12 24Q22 12 32 24Q22 34 12 24Z" fill="#3d3d3d" />
                            <circle cx="22" cy="24" r="4" fill="#3d3d3d" stroke="#ddd" strokeWidth="2" />
                        </Icon>
                    </DwTool>
                    <DwTool aria-label="Live code" $active>
                        <Icon w={36} h={22}><path d="M2 3H22M10 11H30M14 19H36" stroke="#333" strokeWidth="4" /></Icon>
                    </DwTool>
                    <DwTool aria-label="Inspect">
                        <Icon w={28} h={28}><circle cx="14" cy="14" r="10" {...ink} /><path d="M14 0V8M14 20V28M0 14H8M20 14H28" {...ink} /></Icon>
                    </DwTool>
                    <DwRule />
                    <DwTool aria-label="Wrap tag">
                        <Icon w={30} h={28}>
                            <path d="M4 5H26" {...ink} /><path d="M0 5L7 0V10ZM30 5L23 0V10Z" fill="#3d3d3d" />
                            <path d="M11 14L19 27M19 14L11 27M8 20H22" {...ink} />
                        </Icon>
                    </DwTool>
                    <DwTool aria-label="Format source">
                        <Icon w={30} h={28}>
                            <path d="M15 9L22 2L28 10L20 18ZM20 12L25 1" {...ink} />
                            <path d="M6 18L2 22L6 27M11 18L15 22L11 27" {...ink} />
                            <circle cx="12" cy="13" r="3" fill="#3d3d3d" />
                        </Icon>
                    </DwTool>
                    <DwRule />
                    <DwTool aria-label="Apply comment">
                        <Icon w={30} h={30}><path d="M2 2H28V22H13L7 29V22H2Z" {...ink} /><path d="M8 5V13M8 16V20" stroke="#3d3d3d" strokeWidth="4" /><path d="M13 12H23" {...ink} strokeDasharray="4 2" /></Icon>
                    </DwTool>
                    <DwTool aria-label="Remove comment">
                        <Icon w={34} h={32}>
                            <path d="M28 14V2H2V22H7V29L14 22" {...ink} /><path d="M8 5V13M8 16V20" stroke="#3d3d3d" strokeWidth="4" /><path d="M13 12H23" {...ink} strokeDasharray="4 2" />
                            <circle cx="24" cy="24" r="7" {...ink} /><path d="M19 29L29 19" {...ink} />
                        </Icon>
                    </DwTool>
                    <DwRule />
                    <DwTool aria-label="More tools">
                        <Icon w={34} h={10}><circle cx="4" cy="5" r="4" fill="#333" /><circle cx="16" cy="5" r="4" fill="#333" /><circle cx="28" cy="5" r="4" fill="#333" /></Icon>
                    </DwTool>
                </DwTools>
                <InsertPanel>
                    <DwTabs>
                        <DwTab>CC Libraries</DwTab>
                        <DwTab $on>Insert</DwTab>
                        <DwTab>CSS Designer</DwTab>
                        <DwTabEnd><Lines color="#6b6b6b" /></DwTabEnd>
                    </DwTabs>
                    <DwSelect aria-label="Insert category"><Chevron w={16} h={10} dir="down" color="#777" /></DwSelect>
                    <ul>
                        {insertItems.map(item => <InsertItem key={item}>{item}</InsertItem>)}
                    </ul>
                </InsertPanel>
            </DwBody>
        </Dreamweaver>
    )
}

const appColors = ['#d03434', '#d03434', '#d03434', '#2f8a50', '#2477cc', '#c9930f', '#2f8a50', '#cc9410', '#c9930f']

function ChromeWindow() {
    return (
        <Chrome $left={17} $right={2000} $top={977} $bottom={0}>
            <ChromeTabs><GreyLight /></ChromeTabs>
            <ChromeRow $h={72}>
                <Icon w={40} h={26}><path d="M40 13H3M14 2L3 13L14 24" stroke="#a3a3a3" strokeWidth="3" /></Icon>
            </ChromeRow>
            <ChromeRow $h={66} $line>
                <Icon w={26} h={26}>
                    {appColors.map((c, i) => (
                        <rect key={i} x={(i % 3) * 10} y={Math.floor(i / 3) * 10} width="6" height="6" fill={c} />
                    ))}
                </Icon>
            </ChromeRow>
            <ChromeRow $h={122} $line />
        </Chrome>
    )
}

function ToolsPanel() {
    return (
        <ToolPanel>
            <Collapse><DoubleChevron color={LIGHT} /></Collapse>
            <PanelHeading>
                <h2>Tools</h2>
                <Lines color={LIGHT} />
            </PanelHeading>
            <ToolGrid>
                {toolRows.map((row, i) => row === null ? <ToolDivider key={i} /> : (
                    <ToolRow key={i}>
                        {row.map(([id, label, more]) => (
                            <ToolButton key={id} aria-label={label} $active={id === 'select'}>
                                <Icon w={64} h={64}>
                                    {tools[id]}
                                    {more && <path d="M60 53V60H53Z" fill={LIGHT} />}
                                </Icon>
                            </ToolButton>
                        ))}
                    </ToolRow>
                ))}
            </ToolGrid>
        </ToolPanel>
    )
}

function Animate() {
    return (
        <AnimateWindow $left={70} $right={440} $top={45} $bottom={426}>
            <TitleBar>
                <TrafficLight $color="#ff5f57" aria-label="Close" />
                <TrafficLight $color="#febc2e" aria-label="Minimize" />
                <TrafficLight $color="#28c840" aria-label="Zoom" />
                <HomeButton aria-label="Home"><HomeIcon /></HomeButton>
                <WorkspaceTab>Animate</WorkspaceTab>
                <Divider $h={38} $gap={22} />
                <TitleActions>
                    <button aria-label="Share"><ShareIcon /></button>
                    <button aria-label="Workspaces"><WorkspaceIcon /></button>
                    <Divider $h={46} />
                    <button aria-label="Test movie"><PlayCircle /></button>
                </TitleActions>
            </TitleBar>
            <AnimateBody>
                <ToolsPanel />
                <DocArea>
                    <DocTabs>
                        <DocTab><Cross size={13} weight={2} color="#a8a8a8" />Video.fla (Canvas)</DocTab>
                    </DocTabs>
                    <SceneBar>
                        <button aria-label="Edit symbols"><ClubIcon /></button>
                        <Divider $h={48} $gap={31} />
                        <SceneButton>
                            Scene 1
                            <Chevron w={22} h={15} dir="down" weight={4} />
                        </SceneButton>
                        <StageTools>
                            <button aria-label="Center stage"><CenterStage /></button>
                            <button aria-label="Rotation tool"><RotateHand /></button>
                            <button aria-label="Clip content"><ClipStage /></button>
                            <ZoomBox>
                                <Stepper>
                                    <button aria-label="Zoom in"><Chevron w={18} h={10} dir="up" /></button>
                                    <button aria-label="Zoom out"><Chevron w={18} h={10} dir="down" /></button>
                                </Stepper>
                                <ZoomInput aria-label="Zoom level" defaultValue="100%" />
                                <ZoomMenu aria-label="Zoom presets"><Chevron w={18} h={10} dir="down" /></ZoomMenu>
                            </ZoomBox>
                        </StageTools>
                    </SceneBar>
                    <StageRow>
                        <Stage>
                            <Note>{'The fla file is still open in Animate,\nBut....'}</Note>
                            <BlueDot />
                        </Stage>
                        <StageGutter><ScrollThumb /></StageGutter>
                    </StageRow>
                </DocArea>
            </AnimateBody>
        </AnimateWindow>
    )
}

function FrameSpan({ kind, frames, last, state }) {
    return (
        <Span $kind={kind} $frames={frames} $last={last} $state={state}>
            <Keyframe $hollow={kind === 'empty'} />
            {(kind === 'motion' || kind === 'tween') && <Arrow />}
            {(kind === 'empty' || kind === 'key') && <EndMark $last={last} />}
        </Span>
    )
}

function Layer({ layer }) {
    const { name, icon, color, state, hidden, lock, spans } = layer
    return (
        <GridRow>
            <LayerCell $indent={icon === 'masked'} $state={state}>
                <LayerIcon kind={icon} />
                <LayerName>{name}</LayerName>
                {state && <ParentDot />}
                <Swatch $color={color} aria-label="Layer color" />
                <CellSlot $w={26} $gap={30}>{hidden && <SmallEyeOff />}</CellSlot>
                <CellSlot $w={16} $gap={31}>{lock && <LockIcon w={16} h={21} />}</CellSlot>
            </LayerCell>
            <FrameStrip $state={state}>
                {spans.map(([kind, frames], i) => (
                    <FrameSpan key={i} kind={kind} frames={frames} last={i === spans.length - 1} state={state} />
                ))}
            </FrameStrip>
        </GridRow>
    )
}

function Timeline() {
    return (
        <TimelineWindow $left={102} $right={0} $top={818} $bottom={0}>
            <TimelineTop><Cross size={12} weight={4} color={LIGHT} /></TimelineTop>
            <TabStrip>
                {timelineTabs.map(t => <TimelineTab key={t} $on={t === 'Timeline'}>{t}</TimelineTab>)}
            </TabStrip>
            <TimelineTools>
                <LayerTools>
                    <button aria-label="Layers view"><LayersIcon /></button>
                    <button aria-label="Camera"><CameraIcon /></button>
                    <button aria-label="Parenting view"><TreeIcon /></button>
                    <button aria-label="Layer depth"><GraphIcon /></button>
                </LayerTools>
                <Readouts>
                    <span>24.00</span><sup>FPS</sup>
                    <b>1</b><sup>F</sup>
                </Readouts>
                <Controls>
                    {frameControls.map((c, i) => c === null ? <ControlDivider key={i} /> : (
                        <ControlButton key={i} aria-label={c[0]}><Icon w={48} h={48}>{c[1]}</Icon></ControlButton>
                    ))}
                </Controls>
                <ZoomGroup>
                    <button aria-label="Reset timeline zoom">
                        <Icon w={32} h={26}>
                            <path d="M6 13Q15 -2 25 6Q29 10 30 16" stroke={LIGHT} strokeWidth="3.5" />
                            <path d="M0 2V16H13Z" fill={LIGHT} />
                            <path d="M0 23H32" stroke={LIGHT} strokeWidth="4" />
                        </Icon>
                    </button>
                    <ZoomSlider type="range" aria-label="Timeline zoom" min="0" max="100" defaultValue="0" />
                </ZoomGroup>
            </TimelineTools>
            <Grid>
                <GridRow $head>
                    <LayerHead>
                        <HeadButton $gap={36} aria-label="New layer"><AddIcon /></HeadButton>
                        <HeadButton $gap={32} aria-label="New folder"><FolderIcon /></HeadButton>
                        <HeadButton $gap={0} aria-label="Delete"><TrashIcon /></HeadButton>
                        <HeadDot />
                        <OutlineBox />
                        <HeadButton $gap={24} aria-label="Hide all layers"><EyeOff /></HeadButton>
                        <HeadButton $gap={0} aria-label="Lock all layers"><LockIcon w={24} h={31} /></HeadButton>
                    </LayerHead>
                    <Ruler>
                        <SecondsRow>{seconds.map(s => <span key={s}>{s}</span>)}</SecondsRow>
                        <TickRow />
                        <NumbersRow>{frameNumbers.map(n => <span key={n}>{n}</span>)}</NumbersRow>
                    </Ruler>
                </GridRow>
                {layers.map((layer, i) => <Layer key={i} layer={layer} />)}
                <Playhead />
            </Grid>
        </TimelineWindow>
    )
}

export default function App() {
    return (
        <>
            <GlobalStyle />
            <Desktop>
                <BrowserWindow />
                <DreamweaverWindow />
                <ChromeWindow />
                <Animate />
                <Timeline />
                <TopMenu />
                <Scribble width="900" height="600" viewBox="0 0 900 600" fill="none" stroke="#e8080c" strokeWidth="4">
                    <path d={smooth(loopPoints)} />
                    <path d={smooth(leaderPoints)} />
                </Scribble>
            </Desktop>
        </>
    )
}
